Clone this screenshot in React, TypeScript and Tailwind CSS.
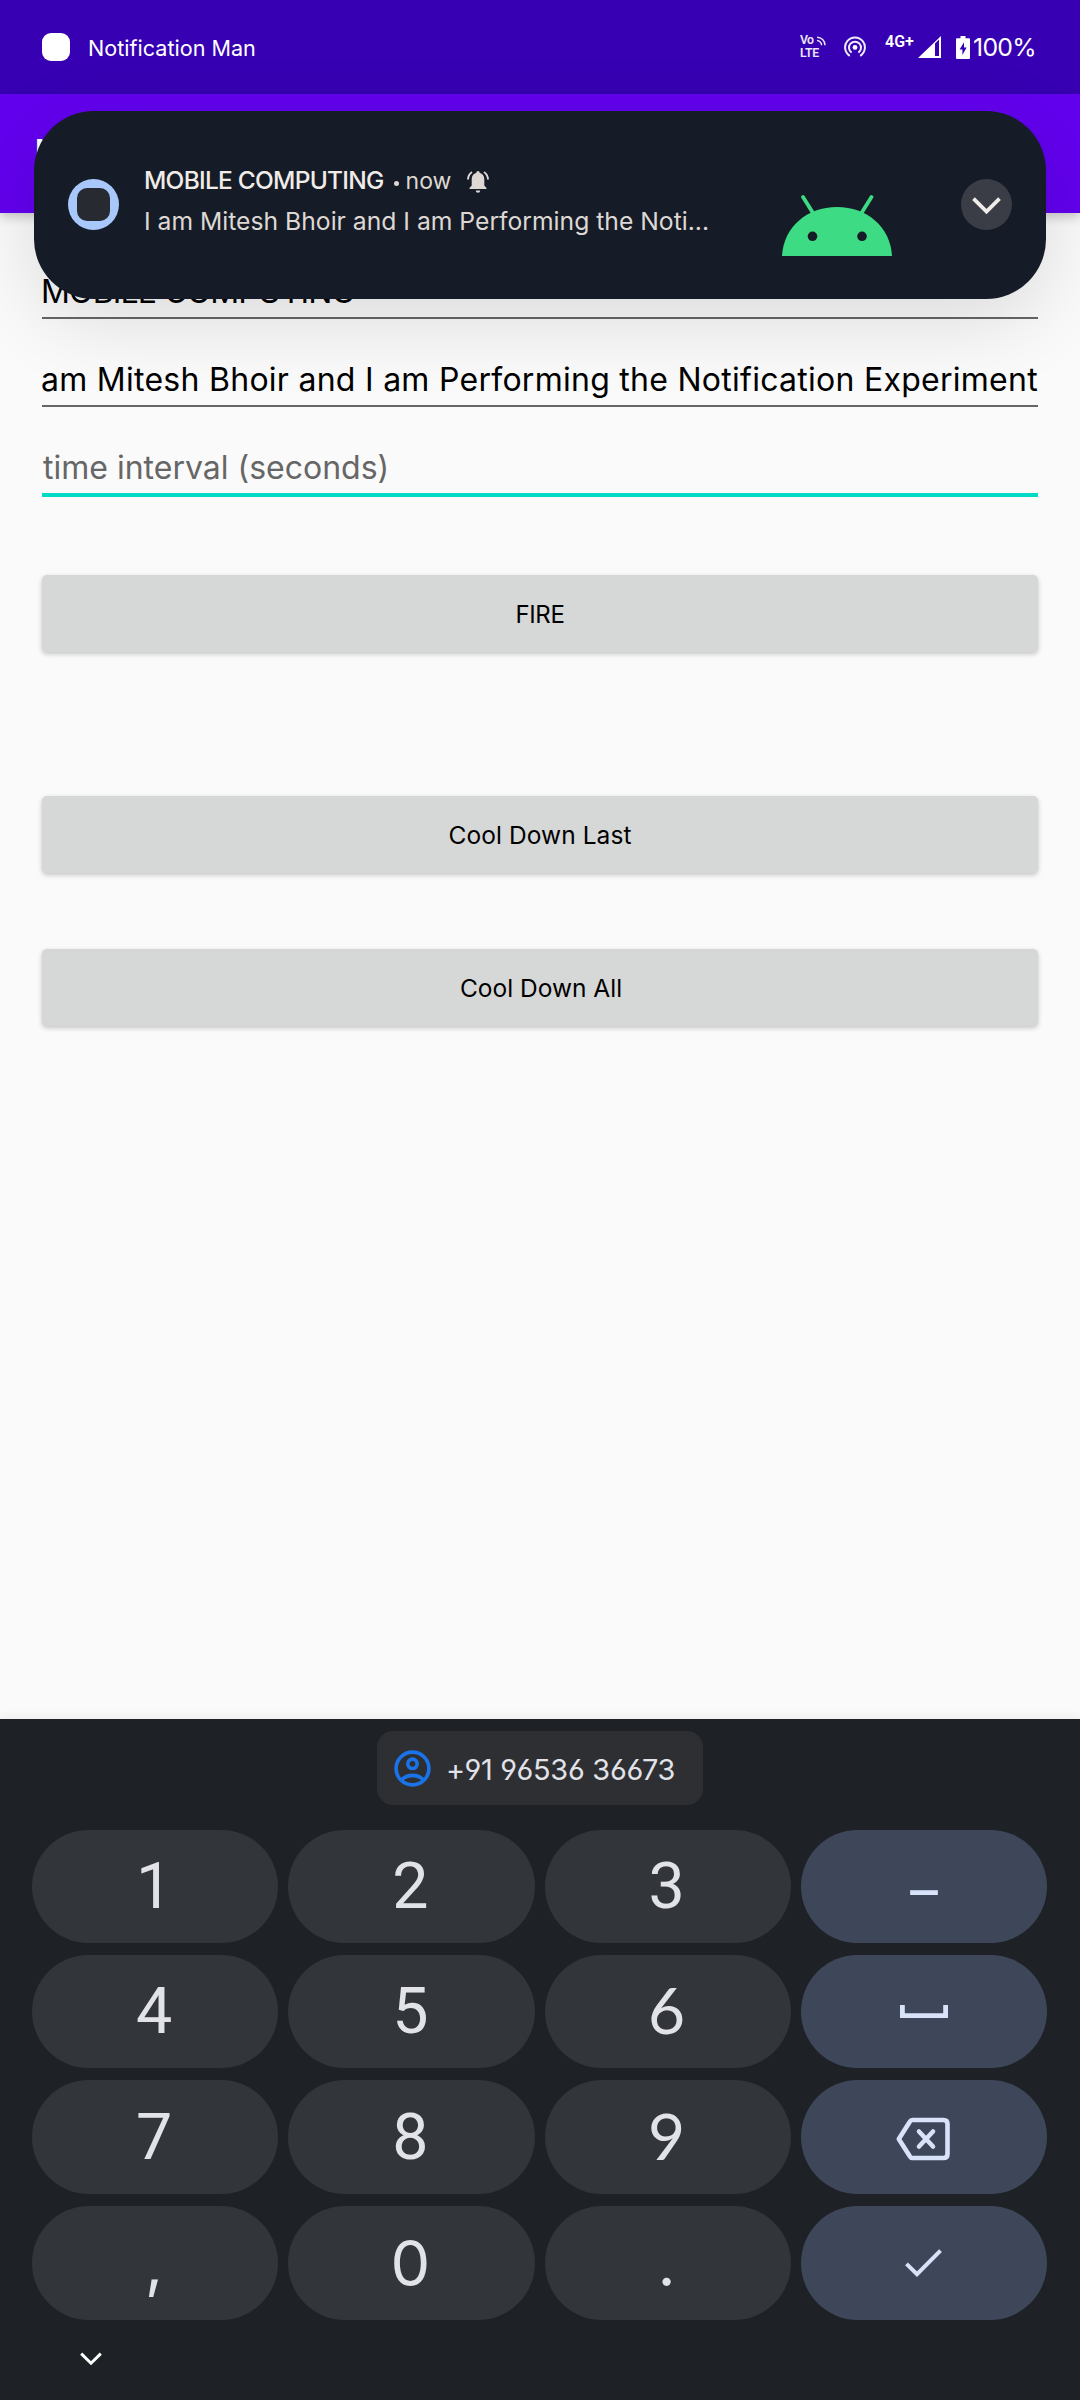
import type { ReactNode } from "react";

function VolteIcon() {
  return (
    <div className="relative h-[22px] w-[26px] font-[Roboto,sans-serif] text-[12.3px] font-semibold text-white/90">
      <div className="h-[12px] leading-[9px] tracking-[-0.6px]">Vo</div>
      <div className="h-[10px] leading-[10px] tracking-[-0.2px]">LTE</div>
      <svg className="absolute right-0 top-0" width="10" height="10" viewBox="0 0 10 10" fill="none" stroke="currentColor" strokeWidth="1.5">
        <path d="M1 1.2A8 8 0 0 1 9 9.2M1 4.6A4.6 4.6 0 0 1 5.6 9.2" />
      </svg>
    </div>
  );
}

function HotspotIcon() {
  return (
    <svg width="22" height="22" viewBox="0 0 22 22" fill="none" stroke="white" strokeOpacity="0.92" strokeWidth="2">
      <path d="M5.8 19.8A9.9 9.9 0 1 1 16.2 19.8" />
      <path d="M7.6 16.6A6 6 0 1 1 14.4 16.6" />
      <circle cx="11" cy="11.4" r="2.4" fill="white" stroke="none" />
    </svg>
  );
}

function StatusBar() {
  return (
    <header className="flex h-[94px] items-center bg-[#3700b3] pl-[42px] text-white">
      <div className="h-7 w-7 rounded-[9px] bg-white" />
      <span className="ml-[18px] mt-[3px] text-[21.6px] leading-none">Notification Man</span>
      <div className="ml-auto flex w-[280px] items-center">
        <VolteIcon />
        <div className="ml-[18px]">
          <HotspotIcon />
        </div>
        <span className="mb-[11px] ml-[19px] w-[29px] whitespace-nowrap font-[Roboto,sans-serif] text-[16px] font-semibold leading-none">4G+</span>
        <svg className="ml-[4px]" width="23" height="22" viewBox="0 0 23 22" fill="white">
          <path fillRule="evenodd" d="M23 0V22H0ZM17 7.4V20H21V3.4Z" />
        </svg>
        <svg className="ml-[15px]" width="14" height="23" viewBox="0 0 14 23" fill="white">
          <path fillRule="evenodd" d="M4.5 0h5v2.3H13a1 1 0 0 1 1 1V22a1 1 0 0 1-1 1H1a1 1 0 0 1-1-1V3.300a1 1 0 0 1 1-1h3.500ZM8 6.300 3.600 13.600H6.400V19L10.600 11.600H8Z" />
        </svg>
        <span className="ml-[3px] text-[24.8px] leading-none tracking-[-0.7px]">100%</span>
      </div>
    </header>
  );
}

function AndroidHead() {
  return (
    <svg className="ml-px mt-[41px] shrink-0" width="110" height="61" viewBox="0 0 110 61" fill="none">
      <path d="M0 61C1.500 32 25 12 55 12S108.500 32 110 61Z" fill="#3ddc84" />
      <path d="M21 2 31 18M89.500 2 79.500 18" stroke="#3ddc84" strokeWidth="3.800" strokeLinecap="round" />
      <circle cx="30.500" cy="41.300" r="4.800" fill="#161c27" />
      <circle cx="80" cy="41.300" r="4.800" fill="#161c27" />
    </svg>
  );
}

function NotificationCard() {
  return (
    <div className="absolute left-[34px] top-[111px] flex h-[188px] w-[1012px] items-center rounded-[60px] bg-[#161c27] pl-[34px] shadow-[0_20px_80px_rgba(0,0,0,0.13)]">
      <div className="mb-px flex h-[51px] w-[51px] shrink-0 items-center justify-center rounded-full bg-[#a8c7fa]">
        <div className="h-[33px] w-[33px] rounded-[10px] bg-[#272a31]" />
      </div>
      <div className="ml-[25px] w-[637px] shrink-0 whitespace-nowrap pb-[8px] text-[#ddd8d4]">
        <div className="flex h-[41px] items-center">
          <span className="text-[24.5px] font-medium leading-[41px] tracking-[-0.75px] text-[#f1ece8]">MOBILE COMPUTING</span>
          <span className="ml-[10px] mt-[5px] h-[5px] w-[5px] rounded-full bg-[#ddd8d4]" />
          <span className="ml-[7px] mt-px w-[61px] text-[23px] leading-[41px]">now</span>
          <svg className="mt-[3px]" width="22" height="22" viewBox="0 0 22 22" fill="#ddd8d4">
            <path d="M11 0a1.600 1.600 0 0 1 1.600 1.700C15.600 2.500 17.300 5 17.300 8v6.500L19.500 17v1H2.500v-1l2.200-2.500V8c0-3 1.700-5.500 4.700-6.300A1.600 1.600 0 0 1 11 0ZM8.800 19.500h4.400a2.200 2.200 0 0 1-4.400 0Z" />
            <path d="M5 1A9.500 9.500 0 0 0 1 8.500M17 1a9.500 9.500 0 0 1 4 7.500" fill="none" stroke="#ddd8d4" strokeWidth="1.900" />
          </svg>
        </div>
        <div className="h-[41px] text-[24.7px] leading-[41px]">I am Mitesh Bhoir and I am Performing the Noti...</div>
      </div>
      <AndroidHead />
      <div className="mb-px ml-[69px] flex h-[51px] w-[51px] shrink-0 items-center justify-center rounded-full bg-[#3a3d45]">
        <svg className="mt-[3px]" width="29" height="18" viewBox="0 0 29 18" fill="none" stroke="#f1ece8" strokeWidth="3.800">
          <path d="M1.500 1.700 14.500 14.500 27.500 1.700" />
        </svg>
      </div>
    </div>
  );
}

function ActionButton({ className, children }: { className: string; children: ReactNode }) {
  return (
    <button className={`block h-[77px] w-full rounded-[5px] bg-[#d6d7d7] pt-[2px] text-black shadow-[0_2px_5px_rgba(0,0,0,0.22)] ${className}`}>
      {children}
    </button>
  );
}

function Key({ action, children }: { action?: boolean; children: ReactNode }) {
  return (
    <button className={`flex h-full items-center justify-center rounded-full leading-none ${action ? "bg-[#3e4759] text-[#d8e2f9]" : "bg-[#32353a] pr-[2px] text-[#e2e2e9]"}`}>
      {children}
    </button>
  );
}

function Digit({ children }: { children: string }) {
  return <span className="font-[Roboto,sans-serif] text-[64.5px]">{children}</span>;
}

function CurvedDigit({ children }: { children: string }) {
  return <span className="mb-[3px] font-[Lato,sans-serif] text-[64px]">{children}</span>;
}

function RoundGlyph({ children }: { children: string }) {
  return <span className="text-[63px]">{children}</span>;
}

function Keyboard() {
  return (
    <section className="h-[681px] bg-[#1e2125] pt-3 shadow-[0_-2px_10px_rgba(0,0,0,0.06)]">
      <div className="mx-auto flex h-[74px] w-[326px] items-center rounded-2xl bg-[#2e2f33] pl-[17px]">
        <svg width="37" height="37" viewBox="0 0 37 37" fill="none" stroke="#1a73e8" strokeWidth="3.600">
          <circle cx="18.500" cy="18.500" r="16.400" />
          <circle cx="18.500" cy="13.800" r="4.700" />
          <path d="M7.500 30C10.500 26.800 14.300 25.400 18.500 25.400S26.500 26.800 29.500 30" />
        </svg>
        <span className="ml-[15px] mt-[4px] whitespace-nowrap text-[28.9px] leading-none tracking-[-0.25px] text-[#e2e2e9] [font-feature-settings:'cv03','cv04']">+91 96536 36673</span>
      </div>
      <div className="ml-8 mt-[25px] grid h-[490px] w-[1015px] grid-cols-4 grid-rows-[113px_113px_114px_114px] gap-x-[10px] gap-y-3">
        <Key><Digit>1</Digit></Key>
        <Key><Digit>2</Digit></Key>
        <Key><Digit>3</Digit></Key>
        <Key action><span className="mb-[5px] font-['Open_Sans',sans-serif] text-[66px]">–</span></Key>
        <Key><Digit>4</Digit></Key>
        <Key><Digit>5</Digit></Key>
        <Key><CurvedDigit>6</CurvedDigit></Key>
        <Key action>
          <svg width="48" height="13" viewBox="0 0 48 13" fill="none" stroke="currentColor" strokeWidth="4.800">
            <path d="M2.400 0V10.600H45.600V0" />
          </svg>
        </Key>
        <Key><Digit>7</Digit></Key>
        <Key><Digit>8</Digit></Key>
        <Key><CurvedDigit>9</CurvedDigit></Key>
        <Key action>
          <svg className="mr-[2px] mt-[4px]" width="54" height="44" viewBox="0 0 54 44" fill="none" stroke="currentColor" strokeWidth="4.600" strokeLinejoin="round" strokeLinecap="round">
            <path d="M16.500 3H47.500Q51.500 3 51.500 7V37Q51.500 41 47.500 41H16.500Q14.800 41 13.800 39.300L2.800 22 13.800 4.700Q14.800 3 16.500 3Z" />
            <path d="M23 14.500 37 29.500M37 14.500 23 29.500" />
          </svg>
        </Key>
        <Key><RoundGlyph>,</RoundGlyph></Key>
        <Key><RoundGlyph>0</RoundGlyph></Key>
        <Key><RoundGlyph>.</RoundGlyph></Key>
        <Key action>
          <svg width="37" height="28" viewBox="0 0 37 28" fill="none" stroke="currentColor" strokeWidth="4">
            <path d="M1.500 14.800 12 25.200 35.500 1.600" />
          </svg>
        </Key>
      </div>
      <svg className="ml-[80px] mt-[32px]" width="22" height="14" viewBox="0 0 22 14" fill="none" stroke="white" strokeWidth="3">
        <path d="M1.200 1.600 11 11.200 20.800 1.600" />
      </svg>
    </section>
  );
}

export default function App() {
  return (
    <div className="relative flex h-[2400px] w-[1080px] flex-col overflow-hidden bg-[#fafafa] font-[Inter,sans-serif]">
      <StatusBar />
      <div className="flex h-[119px] items-center bg-[#6200ee] pl-[34px] text-[38px] font-medium text-white shadow-[0_4px_10px_rgba(0,0,0,0.2)]">
        Notification Man
      </div>
      <main className="flex-1 px-[42px] pt-[18px]">
        <div className="flex h-[88px] items-end overflow-hidden whitespace-nowrap border-b-2 border-[#666] text-[32px] leading-[50px] tracking-[-0.87px] text-black">
          <span className="-ml-px">MOBILE COMPUTING</span>
        </div>
        <div className="flex h-[88px] items-end border-b-2 border-[#666] text-[32px] leading-[50px] tracking-[0.27px] text-black">
          <span className="-ml-px whitespace-nowrap">am Mitesh Bhoir and I am Performing the Notification Experiment</span>
        </div>
        <div className="flex h-[90px] items-end border-b-4 border-[#03dac5] pl-px text-[32px] leading-[50px] text-[#666]">
          time interval (seconds)
        </div>
        <ActionButton className="mt-[78px] text-[24px] tracking-[-0.4px]">FIRE</ActionButton>
        <ActionButton className="mt-[144px] text-[24.500px] tracking-[0.08px]">Cool Down Last</ActionButton>
        <ActionButton className="mt-[76px] pl-[2px] text-[24.500px]">Cool Down All</ActionButton>
      </main>
      <Keyboard />
      <NotificationCard />
    </div>
  );
}
